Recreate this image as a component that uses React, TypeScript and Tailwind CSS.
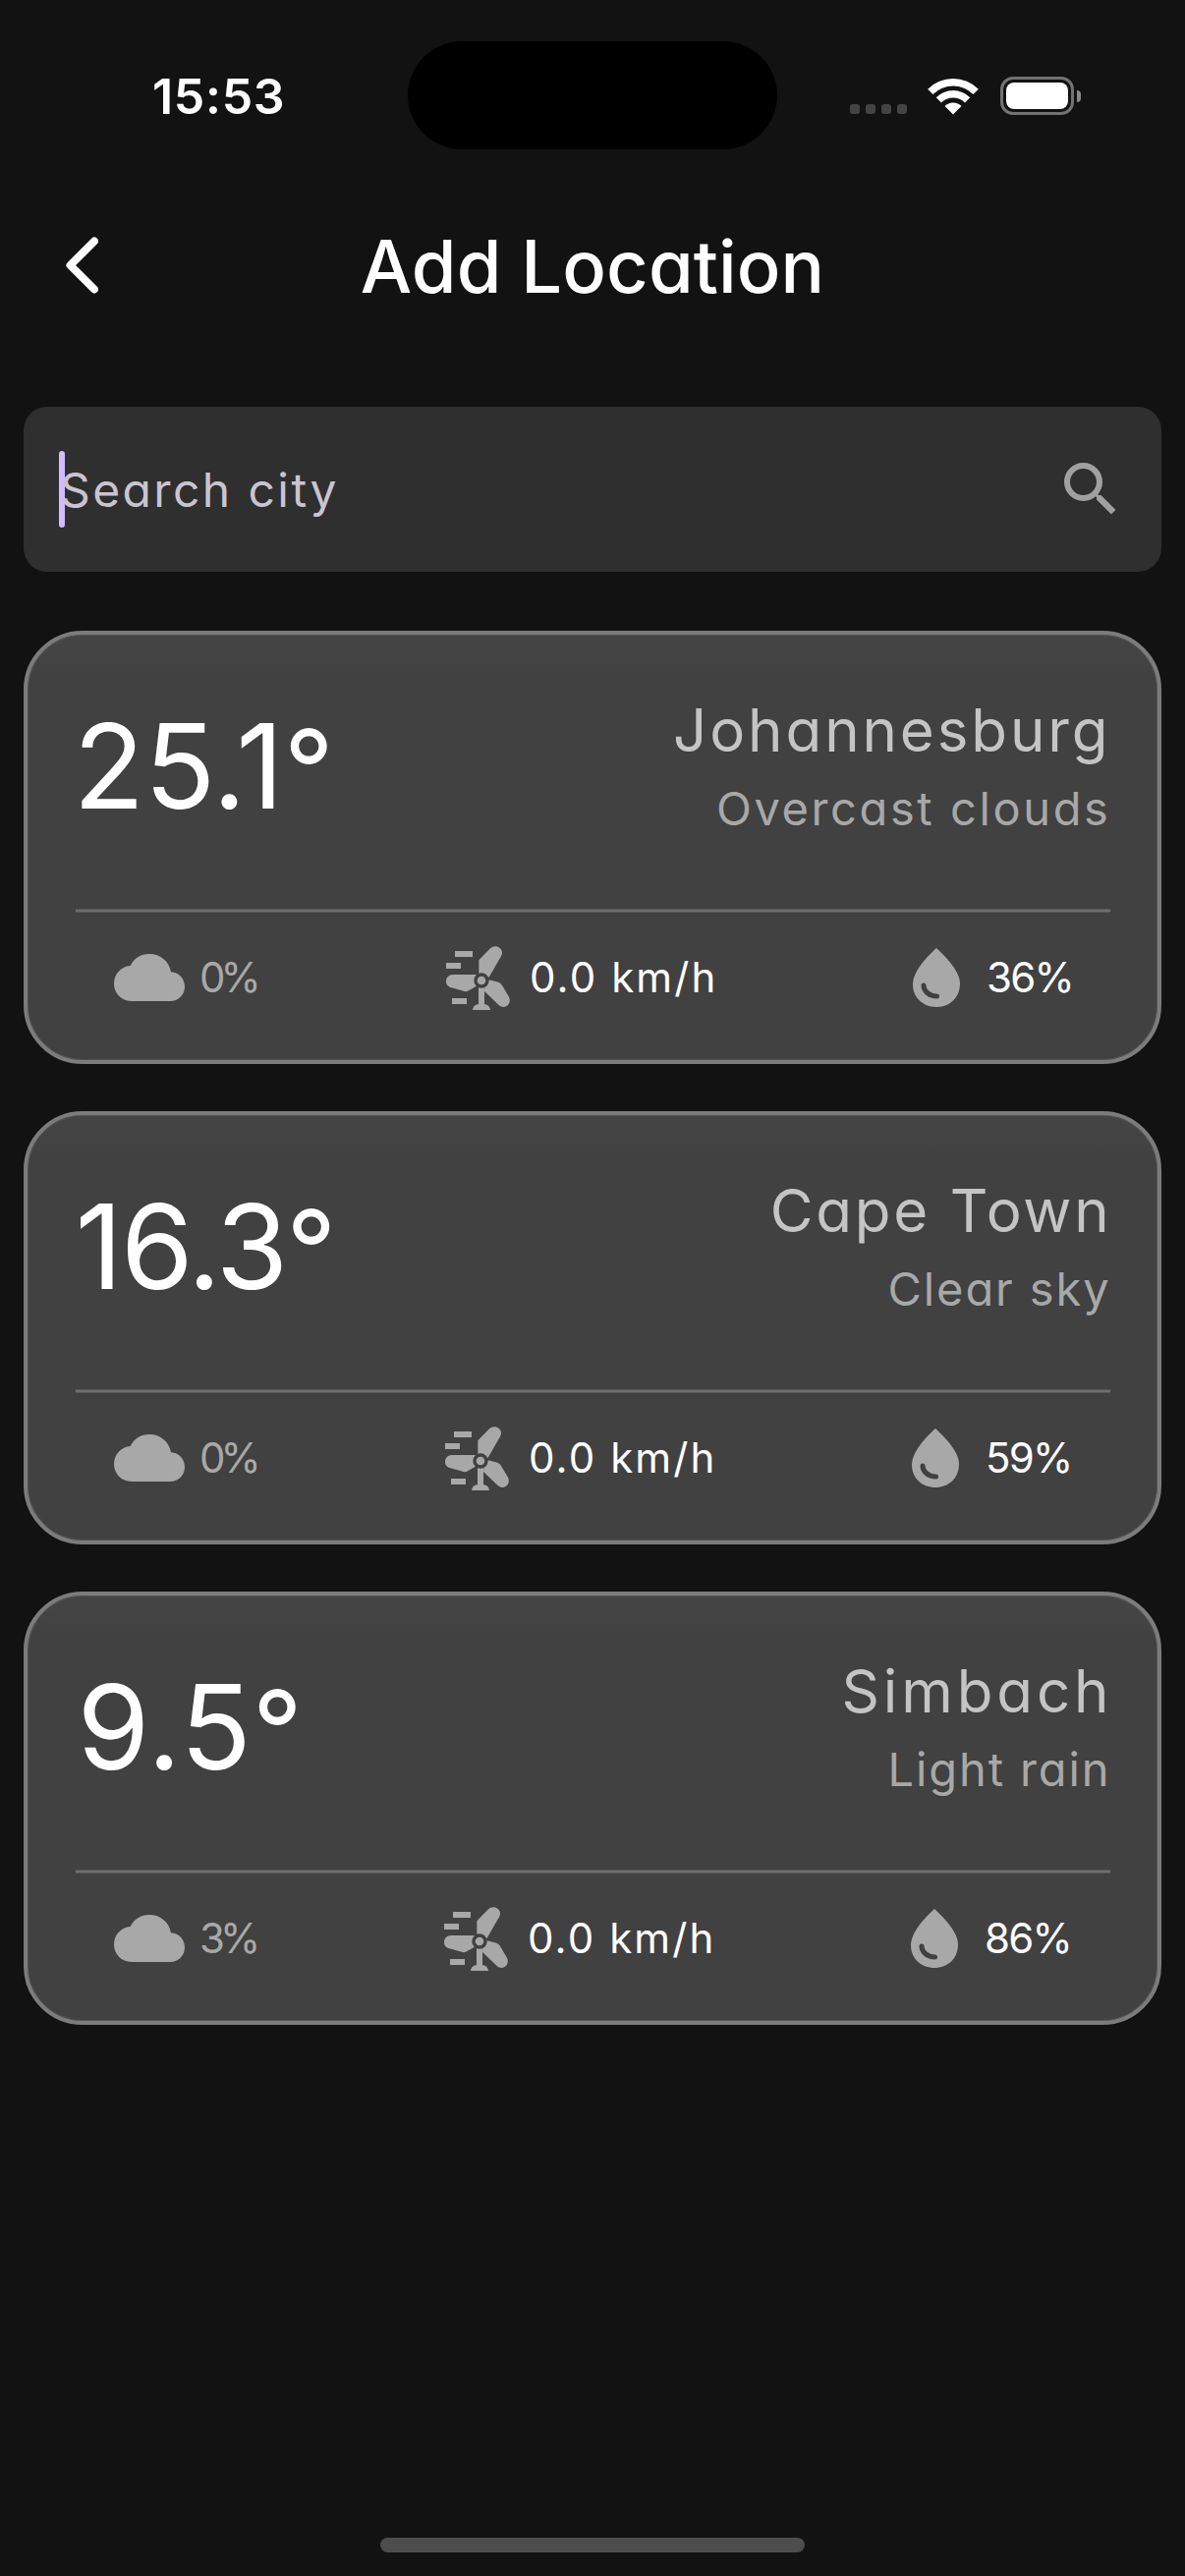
type City = {
  temp: string;
  tempClass: string;
  name: string;
  nameClass: string;
  sky: string;
  skyClass: string;
  clouds: string;
  wind: string;
  humidity: string;
  shiftClass: string;
};

const cities: City[] = [
  {
    temp: '25.1', tempClass: '-ml-[2px] tracking-[0px]',
    name: 'Johannesburg', nameClass: 'tracking-[2.9px] -mr-[1px]',
    sky: 'Overcast clouds', skyClass: 'tracking-[2.6px] -mr-[1px]',
    clouds: '0%', wind: '0.0 km/h', humidity: '36%', shiftClass: 'ml-[190px]',
  },
  {
    temp: '16.3', tempClass: 'tracking-[-2px]',
    name: 'Cape Town', nameClass: 'tracking-[2.8px] -mr-[2px]',
    sky: 'Clear sky', skyClass: 'tracking-[1.9px] -mr-[1px]',
    clouds: '0%', wind: '0.0 km/h', humidity: '59%', shiftClass: 'ml-[189px]',
  },
  {
    temp: '9.5', tempClass: 'ml-[2px] tracking-[0.8px]',
    name: 'Simbach', nameClass: 'tracking-[3.9px] -mr-[3px]',
    sky: 'Light rain', skyClass: 'tracking-[1.9px] -mr-[1px]',
    clouds: '3%', wind: '0.0 km/h', humidity: '86%', shiftClass: 'ml-[188px]',
  },
];

function WifiIcon() {
  return (
    <svg viewBox="0 0 52 38" className="h-[38px] w-[52px] fill-white">
      <path d="M.2 11.7A36.5 36.5 0 0 1 51.8 11.7L46.5 17A29 29 0 0 0 5.5 17Z" />
      <path d="M8.7 20.2A24.5 24.5 0 0 1 43.3 20.2L38 25.5A17 17 0 0 0 14 25.5Z" />
      <path d="M17.5 29A12 12 0 0 1 34.5 29L26 37.5Z" />
    </svg>
  );
}

function CloudIcon() {
  return (
    <svg viewBox="48 63 216 144" className="h-[48px] w-[72px] shrink-0 fill-[#a8a8a8]">
      <path d="M102 207C70 207 48 183 48 154C48 124 70 101 98 99C108 77 130 63 156 63C190 63 217 86 222 118C246 119 264 138 264 163C264 188 245 207 220 207Z" />
    </svg>
  );
}

function TurbineIcon() {
  return (
    <svg viewBox="1062 39 195 195" className="h-[65px] w-[65px] shrink-0 fill-[#a8a8a8]">
      <path d="M1089 54h54v18h-54zM1062 90h45v18h-45zM1080 198h45v18h-45z" />
      <path d="M1162 130V82L1197 46C1205 38 1218 37 1226 45C1234 52 1235 61 1230 70L1193 134Z" />
      <path d="M1156 126H1083C1070 126 1062 136 1062 147C1062 158 1069 163 1078 166L1118 177Q1125 179 1131 175L1160 158Z" />
      <path d="M1190 141L1222 149Q1229 151 1233 159L1254 194C1259 205 1256 216 1247 222C1238 227 1229 225 1222 218L1179 177L1180 160Z" />
      <path d="M1161 160h18v57c10 0 17 7 18 17h-54c1-10 8-17 18-17z" />
      <circle cx="1170" cy="144" r="23" className="fill-[#404040]" />
      <circle cx="1170" cy="144" r="13" />
    </svg>
  );
}

function DropIcon() {
  return (
    <svg viewBox="0 0 48 60" className="h-[60px] w-[48px] shrink-0">
      <path d="M24 0C14 9 0 24 0 37C0 51 11 60 24 60S48 51 48 36C48 24 34 9 24 0Z" fill="#a8a8a8" />
      <path d="M11 38C11 44 17 49 24.5 49" fill="none" stroke="#404040" strokeWidth="5" strokeLinecap="round" />
    </svg>
  );
}

function StatusBar() {
  return (
    <div className="flex h-[152px] items-start">
      <div className="ml-[155px] mt-[73px] w-[260px] text-[50px] font-semibold leading-none tracking-[0.7px]">15:53</div>
      <div className="mt-[42px] h-[110px] w-[376px] rounded-full bg-black" />
      <div className="ml-[74px] mt-[106px] flex gap-[6px]">
        <i className="h-[10px] w-[10px] rounded-[3px] bg-[#444]" />
        <i className="h-[10px] w-[10px] rounded-[3px] bg-[#444]" />
        <i className="h-[10px] w-[10px] rounded-[3px] bg-[#444]" />
        <i className="h-[10px] w-[10px] rounded-[3px] bg-[#444]" />
      </div>
      <div className="ml-[21px] mt-[79px]"><WifiIcon /></div>
      <div className="ml-[22px] mt-[78px] flex items-center gap-[3px]">
        <div className="h-[39px] w-[75px] rounded-[13px] border-[3px] border-[#727272] p-[3px]">
          <div className="h-full w-full rounded-[8px] bg-white" />
        </div>
        <div className="h-[12px] w-[4px] rounded-r-full bg-[#8a8a8a]" />
      </div>
    </div>
  );
}

function CityCard({ city }: { city: City }) {
  return (
    <article className="h-[441px] rounded-[60px] border-4 border-[#7c7c7c] bg-linear-to-b from-[#454545] to-[#414141] to-10% px-[48.5px] shadow-[inset_0_0_0_1px_#545454]">
      <div className="flex h-[279px] items-start justify-between">
        <div className={`mt-[75px] text-[119px] leading-none ${city.tempClass}`}>
          {city.temp}<span className="text-[112px] leading-none">°</span>
        </div>
        <div className="flex flex-col items-end pt-[67px] leading-none">
          <h2 className={`text-[60px] text-[#c4c4c4] ${city.nameClass}`}>{city.name}</h2>
          <p className={`mt-[26px] text-[47px] text-[#a8a8a8] ${city.skyClass}`}>{city.sky}</p>
        </div>
      </div>
      <hr className="h-[4px] border-y border-[#575757] bg-[#6f6f6f]" />
      <div className="flex h-[132px] items-center pl-[39.5px] text-[42px] leading-none">
        <div className="flex w-[148px] items-center">
          <CloudIcon />
          <span className="ml-[15px] tracking-[-5px] text-[#a8a8a8]">{city.clouds}</span>
        </div>
        <div className={`flex w-[275px] items-center ${city.shiftClass}`}>
          <TurbineIcon />
          <span className="ml-[20px] whitespace-nowrap tracking-[2.1px]">{city.wind}</span>
        </div>
        <div className="ml-[200px] flex items-center">
          <DropIcon />
          <span className="ml-[27px] tracking-[-1.8px]">{city.humidity}</span>
        </div>
      </div>
    </article>
  );
}

export default function App() {
  return (
    <main className="flex h-[2622px] w-[1206px] flex-col bg-[#121212] font-['Inter',sans-serif] text-white [font-feature-settings:'cv11']">
      <StatusBar />
      <header className="mt-[80px] grid h-[74px] grid-cols-[200px_1fr_200px] items-center">
        <svg viewBox="0 0 33 58" className="ml-[67px] h-[58px] w-[33px]" fill="none" stroke="white" strokeWidth="8" strokeLinecap="round" strokeLinejoin="round">
          <path d="M29 4.5L4.5 29L29 53.5" />
        </svg>
        <h1 className="pt-[2px] text-center text-[74px] font-medium leading-none tracking-[0.1px]">Add Location</h1>
      </header>
      <div className="mx-6 mt-[108px] flex h-[168px] items-center rounded-[24px] bg-[#2f2f2f] px-[36px]">
        <span className="h-[78px] w-[6px] rounded-full bg-[#d0bcff]" />
        <span className="-ml-[5px] mt-[1px] text-[48px] leading-none tracking-[2.4px] text-[#cac4d0]">Search city</span>
        <svg viewBox="0 0 24 24" className="ml-auto h-[72px] w-[72px] fill-[#a0a0a0]">
          <path d="M15.5 14h-.79l-.28-.27A6.471 6.471 0 0 0 16 9.5 6.5 6.5 0 1 0 9.5 16c1.61 0 3.09-.59 4.23-1.57l.27.28v.79l5 4.99L20.49 19l-4.99-5zm-6 0C7.01 14 5 11.99 5 9.5S7.01 5 9.5 5 14 7.01 14 9.5 11.99 14 9.5 14z" />
        </svg>
      </div>
      <section className="mx-6 mt-[60px] flex flex-col gap-[48px]">
        {cities.map((city) => <CityCard key={city.name} city={city} />)}
      </section>
      <div className="mx-auto mb-[24px] mt-auto h-[15px] w-[432px] rounded-full bg-[#4d4d4d]" />
    </main>
  );
}
